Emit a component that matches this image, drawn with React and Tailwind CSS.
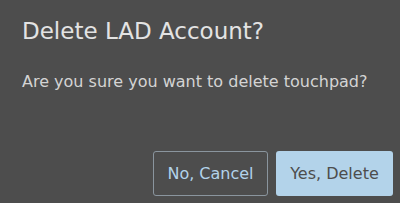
import React from 'react';

const App = () => {
    return (
        <div className="w-[400px] h-[203px] bg-[#4d4d4d] flex flex-col font-['DejaVu_Sans',sans-serif]">
            <h2 className="text-[23px] leading-none text-[#e3e3e3] pl-[22px] pt-[20px]">Delete LAD Account?</h2>
            <p className="text-[16px] leading-none text-[#d4d4d4] pl-[22px] pt-[31px]">Are you sure you want to delete touchpad?</p>
            <div className="flex justify-end gap-2 mt-auto pr-[7px] pb-[7px]">
                <button className="w-[115px] h-[45px] rounded-[3px] border border-[#8a959e] text-[#b3d3ea] text-[16px]">
                    No, Cancel
                </button>
                <button className="w-[117px] h-[45px] rounded-[3px] bg-[#b3d3ea] text-[#4d4d4d] text-[16px]">
                    Yes, Delete
                </button>
            </div>
        </div>
    );
};

export default App;
